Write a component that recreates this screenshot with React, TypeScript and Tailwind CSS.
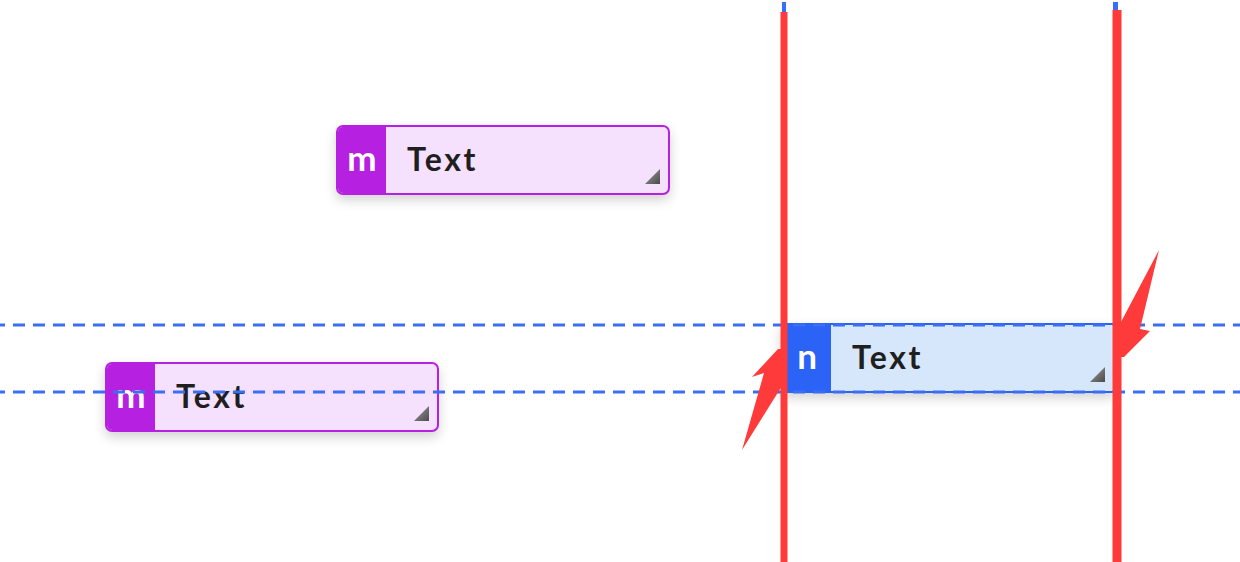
import React from "react";

function Corner() {
  return (
    <svg className="absolute right-[8px] bottom-[9px]" width="15" height="15" viewBox="0 0 15 15">
      <defs>
        <linearGradient id="cg" x1="0" y1="0" x2="1" y2="1">
          <stop offset="0" stopColor="#a0a0a0" />
          <stop offset="1" stopColor="#4a4a4a" />
        </linearGradient>
      </defs>
      <polygon points="15,0 15,15 0,15" fill="url(#cg)" />
    </svg>
  );
}

function Node({
  letter,
  x,
  y,
  variant,
}: {
  letter: string;
  x: number;
  y: number;
  variant: "purple" | "blue";
}) {
  const purple = variant === "purple";
  return (
    <div
      className={
        purple
          ? "absolute flex w-[334px] h-[70px] border-2 border-[#b620e0] rounded-[7px] overflow-hidden bg-[#f5e1fd] shadow-[0_5px_12px_rgba(0,0,0,0.18)]"
          : "absolute flex w-[334px] h-[70px] border-2 border-[#2a63f5] rounded-[3px] overflow-hidden bg-[#d6e6fb] shadow-[0_5px_12px_rgba(0,0,0,0.18)]"
      }
      style={{ left: x, top: y }}
    >
      <div
        className={
          purple
            ? "w-[48px] h-full bg-[#b620e0] flex items-center justify-center text-white font-bold text-[35px] leading-none pb-[5px]"
            : "w-[48px] h-full bg-[#2a63f5] flex items-center justify-center text-white font-bold text-[35px] leading-none pb-[5px]"
        }
      >
        {letter}
      </div>
      <div className="flex-1 flex items-center pl-[21px] pb-[2px] text-[32px] tracking-[2.5px] font-bold text-[#1f1f1f] leading-none">
        Text
      </div>
      <Corner />
    </div>
  );
}

export default function App() {
  return (
    <div
      className="relative w-[1240px] h-[562px] overflow-hidden bg-white"
      style={{ fontFamily: "Lato, 'Open Sans', sans-serif" }}
    >
      <Node letter="m" x={336} y={125} variant="purple" />
      <Node letter="m" x={105} y={362} variant="purple" />
      <Node letter="n" x={781} y={323} variant="blue" />

      <svg className="absolute inset-0 pointer-events-none" width="1240" height="562" viewBox="0 0 1240 562">
        <line x1="0" y1="325" x2="1240" y2="325" stroke="#3a6ef5" strokeWidth="3" strokeDasharray="12 8" strokeDashoffset="7" />
        <line x1="0" y1="392" x2="1240" y2="392" stroke="#3a6ef5" strokeWidth="3" strokeDasharray="12 8" strokeDashoffset="7" />
        <rect x="782" y="2" width="4" height="10" fill="#3a6ef5" />
        <rect x="1113" y="2" width="5" height="9" fill="#3a6ef5" />
        <rect x="780.5" y="12" width="7" height="550" fill="#ff3a3a" />
        <rect x="1112.5" y="10" width="9" height="552" fill="#ff3a3a" />
        <polygon points="778,349 782,349 782,386 742,450 764,373 752,377" fill="#ff3a3a" />
        <polygon points="1159,250 1121,322 1121,357 1124,357 1150,331 1140,329" fill="#ff3a3a" />
      </svg>
    </div>
  );
}
